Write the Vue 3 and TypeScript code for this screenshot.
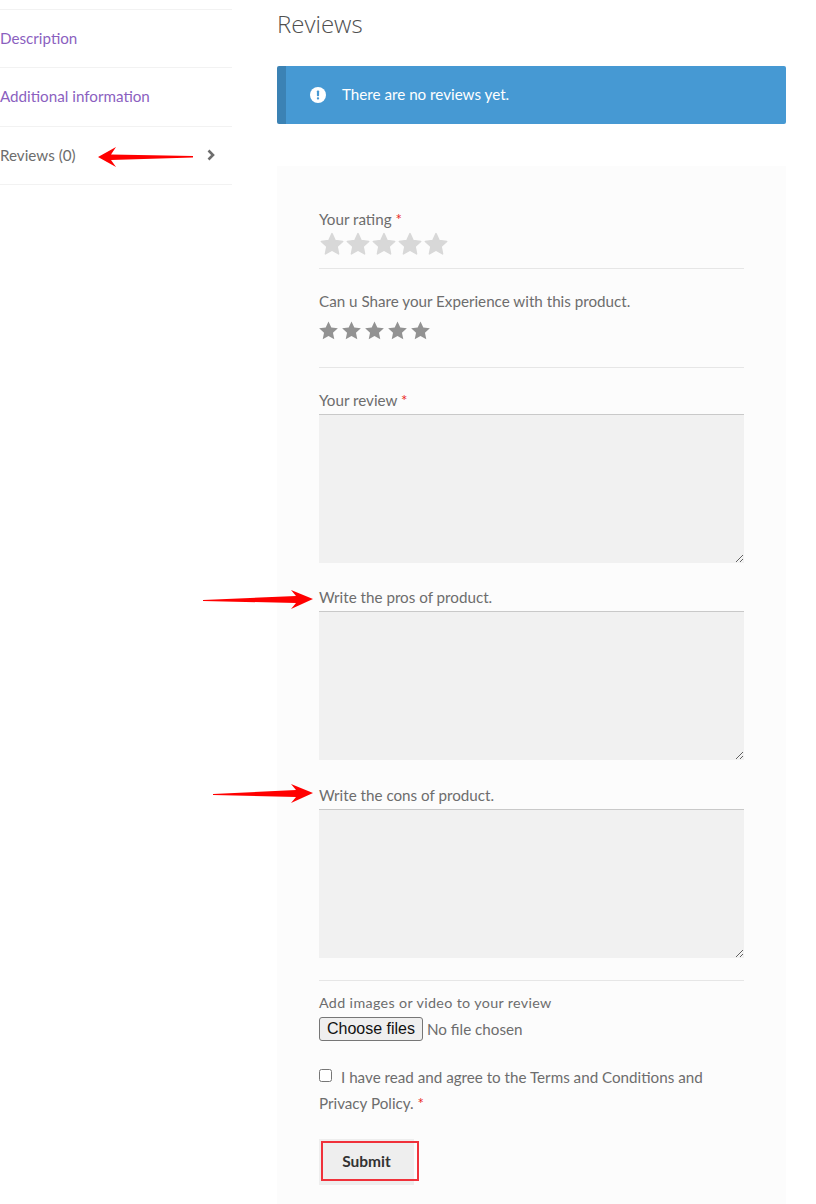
<script setup lang="ts">
const tabs = [
  { label: 'Description', active: false },
  { label: 'Additional information', active: false },
  { label: 'Reviews (0)', active: true },
]
const stars = [1, 2, 3, 4, 5]
const starPath = 'M12 1.6l3.2 6.9 7.5.9-5.6 5.1 1.5 7.4L12 18.2l-6.6 3.7 1.5-7.4-5.6-5.1 7.5-.9z'
const extra = ['Write the pros of product.', 'Write the cons of product.']
</script>

<template>
  <div class="page">
    <nav class="tabs">
      <a v-for="t in tabs" :key="t.label" class="tab" :class="{ active: t.active }">
        <span>{{ t.label }}</span>
        <svg v-if="t.active" class="chev" viewBox="0 0 10 12" width="10" height="12">
          <path d="M2.5 1.5L7 6l-4.500 4.500" fill="none" stroke="#6d6d6d" stroke-width="2.600" />
        </svg>
      </a>
    </nav>

    <main class="content">
      <h2 class="title">Reviews</h2>
      <div class="notice">
        <svg class="info" viewBox="0 0 16 16" width="16" height="16">
          <circle cx="8" cy="8" r="8" fill="#fff" />
          <rect x="6.900" y="3.400" width="2.200" height="5.800" rx="0.800" fill="#4699d3" />
          <rect x="6.900" y="10.300" width="2.200" height="2.200" rx="0.800" fill="#4699d3" />
        </svg>
        <span class="notice-text">There are no reviews yet.</span>
      </div>

      <form class="card" @submit.prevent>
        <label class="lbl first">Your rating <em>*</em></label>
        <div class="stars big">
          <svg v-for="s in stars" :key="s" viewBox="0 0 24 24" width="26" height="24">
            <path :d="starPath" fill="#d8d8d8" stroke="#d8d8d8" stroke-width="1.500" stroke-linejoin="round" />
          </svg>
        </div>
        <hr class="rule r1" />
        <p class="lbl share">Can u Share your Experience with this product.</p>
        <div class="stars small">
          <svg v-for="s in stars" :key="s" viewBox="0 0 24 24" width="23" height="21">
            <path :d="starPath" fill="#929292" />
          </svg>
        </div>
        <hr class="rule r2" />
        <label class="lbl">Your review <em>*</em></label>
        <textarea class="area"></textarea>
        <template v-for="e in extra" :key="e">
          <label class="lbl after">{{ e }}</label>
          <textarea class="area"></textarea>
        </template>
        <hr class="rule r3" />
        <div class="media">Add images or video to your review</div>
        <label class="file">
          <input class="file-input" type="file" multiple />
          <span class="file-btn">Choose files</span>
          <span class="file-name">No file chosen</span>
        </label>
        <div class="terms">
          <input type="checkbox" class="check" />
          <span>I have read and agree to the Terms and Conditions and Privacy Policy. <em>*</em></span>
        </div>
        <div class="submit-wrap">
          <button class="submit" type="submit">Submit</button>
          <span class="marker"></span>
        </div>
      </form>
    </main>

    <svg class="arrow a1" viewBox="0 0 96 22" width="96" height="22">
      <path d="M0 11L18 1l-5 7.500 82 1.500v1.500L13 14l5 7z" fill="#f00" />
    </svg>
    <svg class="arrow a2" viewBox="0 0 110 23" width="110" height="23">
      <path d="M0 12L93 8l-5-6 22 9-22 10 5-6L0 13z" fill="#f00" />
    </svg>
    <svg class="arrow a3" viewBox="0 0 100 23" width="100" height="23">
      <path d="M0 12L83 8l-5-6 22 9-22 10 5-6L0 13z" fill="#f00" />
    </svg>
  </div>
</template>

<style>
html, body { margin: 0; background: #fff; }
</style>

<style scoped>
.page {
  position: relative;
  display: flex;
  gap: 45px;
  width: 816px;
  height: 1204px;
  padding-right: 30px;
  box-sizing: border-box;
  overflow: hidden;
  font-family: "Lato", "Liberation Sans", sans-serif;
  font-size: 15.200px;
  color: #6d6d6d;
}
.tabs {
  flex: 0 0 232px;
  margin-top: 9px;
  border-top: 1px solid #f2f2f2;
  align-self: flex-start;
}
.tab {
  display: flex;
  align-items: center;
  justify-content: space-between;
  box-sizing: border-box;
  height: 58.300px;
  padding-bottom: 1px;
  border-bottom: 1px solid #f2f2f2;
  color: #8b5fbf;
  padding-right: 16px;
}
.tab.active { color: #6d6d6d; }
.content { flex: 1; min-width: 0; }
.title {
  margin: 0;
  height: 66px;
  box-sizing: border-box;
  padding-top: 8px;
  font-family: "Open Sans", sans-serif;
  font-weight: 300;
  font-size: 24px;
  line-height: 32px;
  color: #4f4f4f;
}
.notice {
  display: flex;
  align-items: center;
  gap: 16px;
  height: 58px;
  box-sizing: border-box;
  padding-left: 24px;
  background: #4699d3;
  border-left: 9px solid #3b82b4;
  border-radius: 2px;
  color: #fff;
}
.notice-text { margin-top: -2px; }
.card {
  margin-top: 42px;
  background: #fcfcfc;
  padding: 42px 42px 0;
  height: 1040px;
  box-sizing: border-box;
  display: flex;
  flex-direction: column;
}
.lbl {
  display: block;
  margin: 0;
  height: 22px;
  line-height: 22px;
}
em { color: #ea2a1e; font-style: normal; }
.stars { display: flex; }
.stars.big { margin-top: 2px; margin-left: -0.500px; height: 25px; }
.stars.small { margin-top: 8px; margin-left: -2px; height: 21px; }
.rule {
  width: 100%;
  margin: 0;
  border: 0;
  border-top: 1px solid #e6e6e6;
  flex: none;
}
.r1 { margin-top: 11px; }
.share { margin-top: 21px; }
.r2 { margin-top: 26px; margin-bottom: 21px; }
.area {
  display: block;
  width: 100%;
  height: 149px;
  flex: none;
  box-sizing: border-box;
  border: 0;
  border-top: 1px solid #c9c9c9;
  background: #f1f1f1;
  resize: vertical;
  margin: 3px 0 0;
  outline: 0;
}
.lbl.after { margin-top: 23.300px; }
.r3 { margin-top: 22.400px; }
.media {
  margin-top: 12px;
  height: 20px;
  line-height: 20px;
  font-size: 14.300px;
  letter-spacing: 0.350px;
}
.file {
  display: flex;
  align-items: center;
  gap: 4px;
  margin-top: 4px;
  height: 24px;
  position: relative;
}
.file-input {
  position: absolute;
  width: 1px;
  height: 1px;
  opacity: 0;
}
.file-btn {
  box-sizing: border-box;
  width: 104px;
  height: 24px;
  line-height: 22px;
  text-align: center;
  background: #efefef;
  border: 1px solid #767676;
  border-radius: 3px;
  color: #111;
  font-family: "Liberation Sans", sans-serif;
  font-size: 16px;
}
.terms {
  margin-top: 23px;
  line-height: 26px;
  position: relative;
  text-indent: 22px;
}
.check {
  position: absolute;
  left: 0;
  top: 5px;
  width: 13px;
  height: 13px;
  margin: 0;
}
.submit-wrap {
  position: relative;
  margin-top: 23px;
  align-self: flex-start;
}
.submit {
  display: block;
  width: 95px;
  height: 46px;
  padding: 0 0 2px;
  border: 0;
  background: #eeeeee;
  color: #333;
  font-family: "Lato", sans-serif;
  font-weight: 700;
  font-size: 15.500px;
}
.marker {
  position: absolute;
  left: 2px;
  top: 2px;
  width: 98px;
  height: 40px;
  box-sizing: border-box;
  border: 2px solid #f0313a;
  pointer-events: none;
}
.arrow { position: absolute; }
.a1 { left: 98px; top: 146px; }
.a2 { left: 203px; top: 588px; }
.a3 { left: 213px; top: 782px; }
</style>
